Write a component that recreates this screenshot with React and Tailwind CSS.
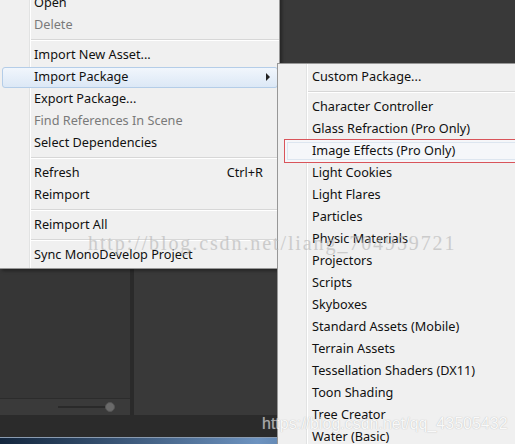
const mainItems = [
  { label: "Open" },
  { label: "Delete", disabled: true },
  { sep: true },
  { label: "Import New Asset..." },
  { label: "Import Package", active: true, arrow: true },
  { label: "Export Package..." },
  { label: "Find References In Scene", disabled: true },
  { label: "Select Dependencies" },
  { sep: true },
  { label: "Refresh", shortcut: "Ctrl+R" },
  { label: "Reimport" },
  { sep: true },
  { label: "Reimport All" },
  { sep: true },
  { label: "Sync MonoDevelop Project" },
];

const subItems = [
  { label: "Custom Package..." },
  { sep: true },
  { label: "Character Controller" },
  { label: "Glass Refraction (Pro Only)" },
  { label: "Image Effects (Pro Only)", marked: true },
  { label: "Light Cookies" },
  { label: "Light Flares" },
  { label: "Particles" },
  { label: "Physic Materials" },
  { label: "Projectors" },
  { label: "Scripts" },
  { label: "Skyboxes" },
  { label: "Standard Assets (Mobile)" },
  { label: "Terrain Assets" },
  { label: "Tessellation Shaders (DX11)" },
  { label: "Toon Shading" },
  { label: "Tree Creator" },
  { label: "Water (Basic)" },
];

const MenuRow = ({ item }) => {
  if (item.sep) {
    return (
      <div className="h-2 flex flex-col justify-center pl-[30px]">
        <div className="h-px bg-[#d7d7d7]" />
        <div className="h-px bg-white" />
      </div>
    );
  }
  return (
    <div className="relative h-[22px] flex items-center">
      {item.active && (
        <div className="absolute left-[2px] right-[1px] top-[1px] bottom-0 rounded-[3px] border border-[#b4cde8] bg-gradient-to-b from-[#f1f6fc] to-[#dce8f6]" />
      )}
      {item.marked && (
        <div className="absolute left-[6px] -right-4 top-[-1px] bottom-[-1px] border border-[#d9545a] bg-[#f5f7fa]">
          <div className="absolute inset-[2px] border border-[#dde6f0]" />
        </div>
      )}
      <span
        className={`relative pl-[34px] ${
          item.disabled ? "text-[#7a7a7a]" : "text-[#111]"
        }`}
      >
        {item.label}
      </span>
      {item.shortcut && (
        <span className="relative ml-auto mr-[16px] text-[#111]">
          {item.shortcut}
        </span>
      )}
      {item.arrow && (
        <span className="relative ml-auto mr-[9px] w-0 h-0 border-y-[4px] border-y-transparent border-l-[4px] border-l-[#222]" />
      )}
    </div>
  );
};

export default function App() {
  return (
    <div
      className="relative w-[515px] h-[444px] overflow-hidden bg-[#393939] text-[12.7px]"
      style={{ fontFamily: "'Noto Sans', 'Open Sans', sans-serif" }}
    >
      {/* Unity editor behind the menus */}
      <div className="flex flex-col h-full">
        <div className="flex flex-1">
          <div className="w-[130px] flex flex-col bg-[#363636]">
            <div className="flex-1" />
            <div className="h-[17px] border-t border-[#2c2c2c] bg-[#3a3a3a] flex items-center justify-end pr-[20px]">
              <div className="relative w-[52px] h-[2px] bg-[#2a2a2a] flex items-center justify-end">
                <div className="w-[10px] h-[10px] rounded-full bg-[#6a6a6a] border border-[#555] -mr-[5px]" />
              </div>
            </div>
          </div>
          <div className="w-[4px] bg-[#2a2a2a]" />
          <div className="flex-1 bg-[#393939]" />
        </div>
        <div className="h-[22px] bg-[#2b2b2b]" />
        <div className="h-[7px] border-t border-[#8a9bb0] bg-gradient-to-r from-[#13263d] via-[#6d93c0] to-[#1a2f4a]" />
      </div>

      {/* Context menu */}
      <div className="absolute left-0 top-[-8px] w-[280px] pb-[2px] bg-[#f0f0f0] border-r border-b border-[#979797] shadow-[2px_2px_3px_rgba(0,0,0,0.35)]">
        <div className="absolute left-[29px] top-0 bottom-0 w-px bg-[#e2e3e3]" />
        <div className="absolute left-[30px] top-0 bottom-0 w-px bg-white" />
        {mainItems.map((item, i) => (
          <MenuRow key={i} item={item} />
        ))}
      </div>

      {/* Import Package submenu */}
      <div className="absolute left-[277px] top-[63px] w-[250px] h-[400px] pt-[2px] bg-[#f0f0f0] border border-[#979797]">
        <div className="absolute left-[28px] top-0 bottom-0 w-px bg-[#e2e3e3]" />
        <div className="absolute left-[29px] top-0 bottom-0 w-px bg-white" />
        {subItems.map((item, i) => (
          <MenuRow key={i} item={item} />
        ))}
      </div>

      {/* blog watermarks */}
      <div
        className="absolute left-[88px] top-[231px] text-[20px] leading-[24px] tracking-[1.9px] text-[#b4b4b4] opacity-60 whitespace-nowrap"
        style={{ fontFamily: "'Liberation Serif', serif" }}
      >
        http://blog.csdn.net/liang_704959721
      </div>
      <div
        className="absolute left-[262px] top-[414px] text-[16px] leading-[20px] text-white opacity-60 whitespace-nowrap [text-shadow:0_0_1px_#888]"
        style={{ fontFamily: "'Liberation Sans', sans-serif" }}
      >
        https://blog.csdn.net/qq_43505432
      </div>
    </div>
  );
}
